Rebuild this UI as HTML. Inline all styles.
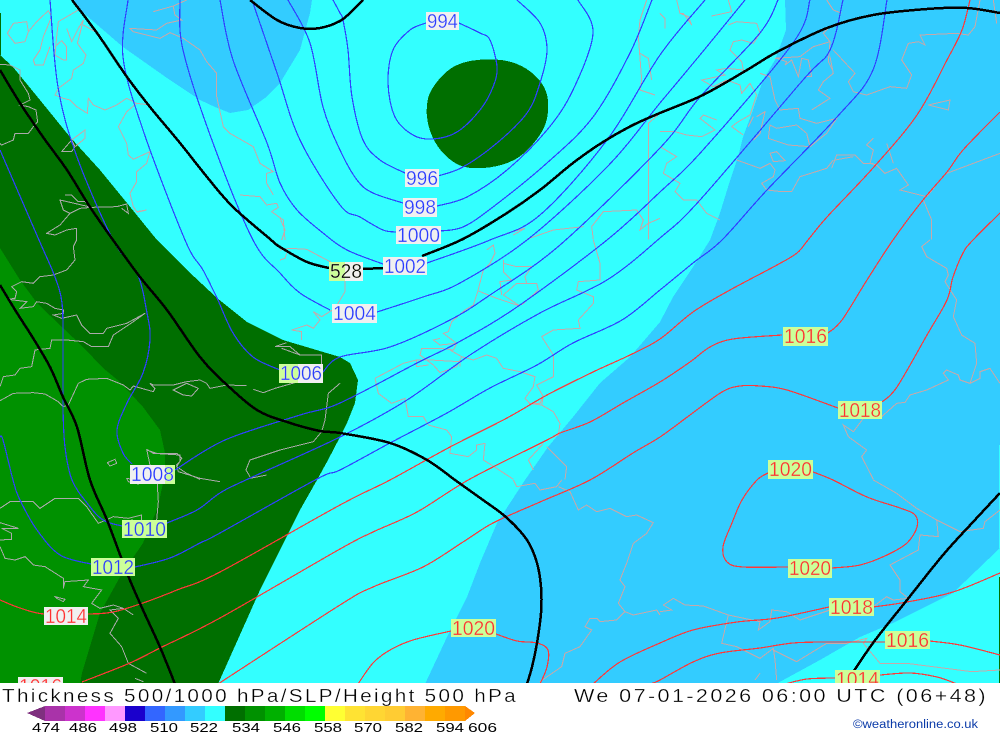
<!DOCTYPE html>
<html><head><meta charset="utf-8"><title>Thickness 500/1000 hPa/SLP/Height 500 hPa</title>
<style>
html,body{margin:0;padding:0;background:#fff;width:1000px;height:733px;overflow:hidden}
svg{display:block}
text{font-family:"Liberation Sans",sans-serif}
.b polyline,.b path{fill:none;stroke:#3040ff;stroke-width:1.2}
.r polyline,.r path{fill:none;stroke:#ff3838;stroke-width:1.2}
.k polyline,.k path{fill:none;stroke:#000;stroke-width:2.5}
.c path{fill:none;stroke-width:3}
.l text{font-size:20px}
.w{fill:#f0f0f0}.g{fill:#ccff99}
.tb{fill:#2a3cff}.tr{fill:#ff3030}.tk{fill:#000}
.sw{stroke:#f0f0f0;stroke-width:.3}.sg{stroke:#ccff99;stroke-width:.3}
</style></head><body>
<svg width="1000" height="733" viewBox="0 0 1000 733" xmlns="http://www.w3.org/2000/svg" shape-rendering="crispEdges">
<rect width="1000" height="684" fill="#33ffff"/>
<path fill="#33ccff" d="M72 0L80 10L123 47L167 78L200 100L215 107L230 113L248 110L265 98L280 83L300 50L310 13L312 0Z"/>
<path fill="#33ccff" d="M785 0L786 30L785 33L775 60L763 80L753 110L743 137L738 157L728 187L720 213L710 240L693 267L673 297L660 322L630 357L600 383L573 417L548 447L525 480L497 523L480 563L467 597L447 637L425 684L776 684L820 660L860 637L893 623L953 593L1000 548V0Z"/>
<path fill="#006f00" d="M0 55L13 67L40 100L70 137L100 170L127 203L157 240L187 270L217 298L247 322L283 340L340 357L350 363L358 380L355 403L347 423L340 437L328 460L317 480L300 510L260 590L218 684H0Z"/>
<path fill="#009100" d="M0 248L20 280L37 303L63 328L83 347L103 368L120 382L143 407L160 430L165 453L165 473L158 507L143 543L120 577L100 613L82 673L80 684H0Z"/>
<path fill="#006f00" d="M495 59.5Q507 60 517 64Q527 68 535 75.5Q543 83 546 91.5Q549 100 548 111.5Q547 123 542 131.5Q537 140 528.5 149Q520 158 508.5 162.5Q497 167 483.5 168Q470 169 461.5 166Q453 163 445 155Q437 147 432.5 137Q428 127 427 117Q426 107 428 98.5Q430 90 438.5 80Q447 70 455 66Q463 62 473 60.5Q483 59 495 59.5Z"/>
<rect x="0" y="13" width="1" height="42" fill="#006f00"/>
<rect x="999" y="577" width="1" height="107" fill="#006f00"/>
<rect x="999" y="445" width="1" height="103" fill="#33ffff"/>

<!-- coastlines -->
<g class="c" stroke="#c8a8a8">
<g transform="scale(.33333)"><path d="M40 70L80 65L85 95L75 125L45 130L22 100ZM85 95L110 65L145 32L155 50L130 110L120 150L100 180L105 195L130 195L150 140M235 30L175 65L170 110L165 165L190 180L200 180L200 140L185 122L165 140M200 85L215 125L235 85L250 60L240 100L232 130L258 165L250 190L220 210L215 235L175 265L165 285L190 295L210 300L230 320L262 340L265 295L280 315L315 330L350 315L380 295L410 310L450 315M250 75L285 95M410 310L380 335L355 380L380 430L385 465L400 478L450 455L440 490L410 515L410 545L390 580L400 620L410 635L440 630L410 637M460 35L520 18L560 0M520 20L525 45L545 60L500 70L470 90L390 85L400 95L480 115L510 98L550 115L600 150L620 185L650 220L650 290L670 380L690 400L760 440L780 490L820 515L800 520L800 550L820 585M720 585L780 590L800 615L830 610L835 622L815 635L850 660L855 720M215 420L255 390L255 415L225 440"/></g>
<g transform="translate(280,160) scale(.33333)"><path d="M0 175L15 210L5 240M0 270L30 265L80 268L150 305L195 350L195 395L165 445L125 470L100 455L120 480L100 505L80 495L35 510L65 515L65 540M20 280L15 295L0 300"/></g>
<g transform="translate(340,240) scale(.33333)"><path d="M440 30L460 15L465 40L450 70L430 90L413 155L400 195L375 210L335 245L325 275L310 280L350 310L340 330L300 325L245 325L240 345L280 375L300 398L350 380L365 350L330 330M413 152L470 175L540 198L490 165L530 130L590 130L595 150L545 195M490 60L490 95L515 120L480 125L485 165M490 70L530 80L575 80L555 110L560 130M300 295L280 300L300 315L350 310M230 360L270 360L360 365L360 380M230 360L230 380L265 375M105 415L190 370L230 360M105 415L115 460L155 490L195 475L205 530L250 530L265 555L320 570L335 590L330 640L385 650L410 630L410 615L435 610L430 660L470 685L520 718M365 350L400 360L440 345L470 355L490 385L540 395L585 410L580 440L555 475L570 490L600 490L610 470L590 435L640 410L640 345L605 290L640 270L720 265L715 240L760 190L760 170L710 150L715 125L780 120L780 70L760 0M610 470L605 495L640 515L660 550L655 585L640 590M565 490L605 495M620 620L680 680L675 718M610 610L565 660L580 690"/></g>
<g transform="translate(340,480) scale(.33333)"><path d="M520 0L530 20L585 10L600 30L650 20L665 0M655 20L690 35L715 90L740 75L770 95L810 85L860 110L890 105L940 128L920 160L880 190L860 250L840 300L855 320L835 370L855 395L880 405L950 390L960 405M855 395L830 420L780 425L770 415L750 415L735 440L755 450L720 500L675 520L665 560L600 605"/></g>
<g transform="translate(340,0) scale(.33333)"><path d="M920 0L900 60L895 110L905 240L900 270L945 285M900 160L925 175L935 240M500 700L555 685L520 705M560 718L640 690L730 680M760 718L755 680L790 635L890 630L910 660L900 690L925 670L960 655M925 718L925 370L960 340"/></g>
<g transform="translate(660,0) scale(.33333)"><path d="M0 40L15 55L15 85M50 0L60 40L85 50L95 75L70 40L60 40M155 48L215 35L205 0M205 75L230 65L290 70L300 100L280 130L245 120L220 125L210 150L245 185L250 210L200 205L170 210L195 225L125 240L160 260L200 240L240 255L245 280L270 250L290 285L270 345L235 365L215 380L250 405M170 360L130 345L120 355L165 390L125 410L80 405L45 395L0 395M300 220L330 230L345 300L360 330L415 325L420 355L470 370L530 355L500 400L450 440L440 400L410 375L350 385L330 375L325 415L385 435L450 440M500 0L520 30L545 40M510 80L490 100L510 125L505 185L520 215M510 125L460 140L420 170L345 175M510 170L520 220L490 245L475 270L510 295L455 330M520 150L585 220L565 245L580 275L620 285L690 260L740 265L755 225L725 180L745 130L775 125L795 135L780 105L890 100L925 105L945 80L960 0M350 175L380 185L375 195L395 180L415 230L425 175L445 180L455 230L435 230M1000 0L1010 70M805 315L870 300L865 330ZM640 415L620 435L640 450L630 490L650 495L675 520L710 505L745 555L720 570L800 590L825 560M680 430L700 490M515 505L530 465L585 465L610 490L640 490M525 480L580 470M230 480L300 505L330 490L345 510L340 530L305 550L320 570L365 575L395 575L420 530L500 505L520 480M330 460L350 455L375 482L340 485ZM790 600L815 660L815 718M860 520L940 490L1020 460M0 440L50 470L20 490L10 520L60 550L45 575L70 600L110 600L140 640L180 660M290 350L315 335L300 400L280 420M280 350L265 380"/></g>
<g transform="translate(660,240) scale(.33333)"><path d="M810 0L785 20L800 50L860 85L865 105L855 125L890 180L880 230L905 285L945 310L950 370L930 430L900 420L895 405L860 390L850 400L865 420L800 450L750 465L735 487L710 490L665 530L640 535L610 535L580 575L550 555L565 590L620 630L605 650L640 718M930 430L960 415L960 395L990 385L1020 430"/></g>
<g transform="translate(660,480) scale(.33333)"><path d="M640 0L710 40L770 85L830 120L900 155L970 145L975 125L1020 90M830 120L835 170L780 165L775 210L690 255L720 300L720 335L745 355L700 360L680 350L640 380L510 390M0 395L35 390L10 375L40 355L75 375L130 378L205 405L300 425L295 450L330 425L335 390L380 395L420 420L480 400L510 390M205 405L185 490L230 500L300 535L340 505L345 540L350 600M340 510L410 545L500 490L560 490L620 475L610 490L660 550L740 550L935 575L1020 570M300 580L285 600"/></g>
</g>
<g class="c" stroke="#aaaaaa">
<g transform="scale(.33333)"><path d="M0 193L30 195L60 210L60 240L85 280L90 300L60 315L85 320L108 330L113 365L100 380L85 400L45 400L40 420L5 435L0 430M185 455L215 420L225 440L215 455ZM195 585L215 585L235 605L255 605L275 622L350 620L380 612L385 640L365 625M275 622L240 625L210 640L190 630L180 600ZM210 640L180 675L140 700L165 705L200 690L230 685L230 720"/></g>
<g transform="translate(0,240) scale(.33333)"><path d="M230 0L220 20L225 60L200 90L160 105L120 110L100 130L65 125L35 140L50 155L45 175L25 178L80 185L60 205L100 200L110 185L140 190L165 205L190 210L190 220L160 225L185 235L230 225L245 255L270 280L310 280L320 265L380 250L435 220L400 245L340 285L325 320L275 320L250 305L200 300L155 300L150 325L105 330L95 380L60 385L45 405L10 410L0 440M0 482L40 460L100 458L135 462L175 485L190 500L205 495L235 430L260 418L320 415L370 435L390 450L400 438L460 455L465 445L450 430L460 435L520 435L560 425L600 420L620 430L630 445L680 435L740 437M520 450L560 430L595 445L575 468L550 465ZM760 448L790 458L825 445L895 425L965 400L965 345L900 345L870 320L825 320L860 308M845 325L900 345M322 668L345 658L350 670L330 678ZM1020 430L985 460L975 540L965 575L940 605L840 630L750 660L738 690L750 710M750 715L800 705M440 630L470 640L530 640L545 655L530 680L560 700L600 718"/></g>
<g transform="translate(0,440) scale(.33333)"><path d="M440 28L460 40L540 45L540 65L530 75L535 95L600 115L660 125M470 100L475 185L470 240M440 28L450 75M380 115L410 120L415 132L385 125ZM0 205L30 185L100 185L120 205L165 175L235 175L260 200L295 250L340 230L385 235L425 225L425 245L395 240L410 270M0 248L55 265L5 265L35 280L35 298L0 300M0 320L15 355L45 360L75 350L100 375L135 380L190 415L190 445L195 425L265 420L250 440L305 450L290 470L275 490L300 505L340 495L370 505L400 525L370 505L330 510L355 535L330 580L365 620L385 670L440 700M165 470L195 478L190 485L170 475ZM405 715L430 725"/></g>
</g>

<!-- isobars blue -->
<g class="b">
<polyline points="426,23 410,30 393,50 388,83 395,117 413,135 433,139 457,132 480,110 493,87 497,67 490,40 480,33 459,23"/>
<polyline points="333,0 340,13 343,20 348,50 352,97 363,140 380,160 405,173"/>
<polyline points="438,176 463,167 497,143 527,113 540,83 547,50 540,23 517,0"/>
<polyline points="288,0 310,43 323,107 340,150 357,180 373,193 403,203"/>
<polyline points="437,206 467,197 507,170 547,130 573,90 593,33 578,0"/>
<polyline points="253,3 277,73 300,140 340,205 360,217 383,230 397,232"/>
<polyline points="440,231 463,227 493,207 547,163 593,117 630,53 652,0"/>
<polyline points="220,0 233,60 267,143 280,183 297,210 323,233 347,250 383,264"/>
<polyline points="427,263 490,240 540,215 607,140 660,55 705,0"/>
<polyline points="180,0 183,50 213,143 253,240 280,273 300,293 330,310"/>
<polyline points="377,312 423,297 460,283 527,240 607,167 660,103 700,55 745,0"/>
<polyline points="128,0 123,57 143,130 185,240 203,270 217,298 233,333 253,357 280,370"/>
<polyline points="323,372 340,357 390,347 450,320 490,295 560,245 660,148 700,97 760,33 778,0"/>
<polyline points="50,0 58,87 77,157 113,240 137,273 147,313 150,340 143,373 127,403 117,430 123,453 132,464"/>
<polyline points="175,470 225,440 300,415 340,403 417,363 457,343 517,307 607,240 660,192 703,150 793,43 810,0"/>
<polyline points="0,150 39,240 55,277 62,303 63,340 63,407 65,447 72,480 87,503 103,520 122,526"/>
<polyline points="167,523 197,510 220,493 248,479 340,437 407,400 473,353 540,313 607,280 660,238 700,200 803,80 830,50 843,0"/>
<polyline points="0,437 3,440 13,480 20,500 37,530 60,555 91,564"/>
<polyline points="135,567 170,558 200,543 220,533 317,479 340,470 390,443 447,413 490,388 537,365 573,343 622,320 660,290 693,263 722,240 767,190 837,117 873,70 887,0"/>
</g>

<!-- isobars red -->
<g class="r">
<polyline points="0,600 20,608 44,614 88,614 113,612 143,603 177,590 220,572 340,505 390,480 450,447 507,418 547,395 593,372 630,355 660,339 693,312 730,290 777,265 797,253 808,240 827,217 873,168 917,115 947,60 962,30 970,0"/>
<polyline points="82,682 130,663 160,648 220,618 340,549 373,532 417,512 470,479 547,440 560,433 590,422 623,403 660,382 690,362 710,347 733,339 782,335"/>
<polyline points="828,333 842,320 867,280 893,240 923,200 947,172 963,150 1000,112"/>
<polyline points="218,684 340,605 373,587 423,567 463,542 493,523 540,502 590,480 633,453 660,437 690,415 722,392 740,386 760,386 787,390 838,408"/>
<polyline points="882,402 897,387 927,335 947,300 953,277 963,253 973,240 1000,213"/>
<polyline points="788,567 743,567 727,562 723,547 732,523 742,500 757,480 768,473"/>
<polyline points="813,472 833,480 867,497 900,508 915,515 917,527 907,543 887,555 860,565 832,568"/>
<polyline points="358,684 373,663 390,650 413,640 451,631"/>
<polyline points="496,634 517,641 537,643 548,650 547,667 540,684"/>
<polyline points="593,684 620,662 660,643 693,630 737,622 777,618 829,607"/>
<polyline points="873,607 907,602 953,592 1000,573"/>
<polyline points="650,684 660,680 693,662 720,653 760,648 793,643 827,642 885,642"/>
<polyline points="930,641 960,645 1000,655"/>
<polyline points="785,684 807,679 835,678"/>
<polyline points="880,675 910,673 937,677 957,684"/>
</g>

<!-- thick black contours -->
<g class="k">
<polyline points="72,0 97,33 127,77 150,107 180,143 207,177 233,207 270,239 280,247 307,262 329,268"/>
<polyline points="363,269 383,268"/>
<polyline points="422,256 463,239 507,213 540,190 573,163 603,142 633,125 660,113 703,95 747,70 777,52 827,28 873,15 927,9 967,8 1000,13"/>
<polyline points="250,0 277,20 300,28 320,28 340,21 353,10 363,0"/>
<polyline points="0,70 20,103 43,137 67,170 90,207 113,240 140,277 167,310 200,357 227,385 257,410 287,422 320,431 340,433 390,443 427,460 455,480 483,500 507,518 527,540 537,563 541,587 541,613 537,643 532,667 527,684"/>
<polyline points="0,285 17,313 33,338 50,367 63,397 77,427 90,480 107,520 127,573 143,610 160,647 175,684"/>
<polyline points="848,680 873,643 907,600 943,555 973,522 1000,493"/>
</g>

<!-- labels -->
<g class="l">
<rect class="w" x="426" y="12" width="33" height="18"/><text class="tb sw" x="427" y="28" textLength="31" lengthAdjust="spacingAndGlyphs">994</text>
<rect class="w" x="405" y="169" width="34" height="18"/><text class="tb sw" x="406" y="185" textLength="32" lengthAdjust="spacingAndGlyphs">996</text>
<rect class="w" x="403" y="198" width="34" height="19"/><text class="tb sw" x="404" y="214" textLength="32" lengthAdjust="spacingAndGlyphs">998</text>
<rect class="w" x="396" y="226" width="45" height="18"/><text class="tb sw" x="397" y="242" textLength="43" lengthAdjust="spacingAndGlyphs">1000</text>
<rect class="w" x="383" y="257" width="44" height="18"/><text class="tb sw" x="384" y="273" textLength="42" lengthAdjust="spacingAndGlyphs">1002</text>
<rect class="w" x="329" y="262" width="34" height="19"/><rect class="g" x="329" y="262" width="16" height="19"/><text class="tk" x="330" y="278" textLength="32" lengthAdjust="spacingAndGlyphs" stroke="#e8f4d8" stroke-width=".3">528</text>
<rect class="w" x="332" y="304" width="45" height="19"/><text class="tb sw" x="333" y="320" textLength="43" lengthAdjust="spacingAndGlyphs">1004</text>
<rect class="w" x="279" y="364" width="44" height="19"/><rect class="g" x="279" y="364" width="19" height="19"/><text class="tb" x="280" y="380" textLength="42" lengthAdjust="spacingAndGlyphs" stroke="#e8f4d8" stroke-width=".3">1006</text>
<rect class="w" x="130" y="465" width="45" height="19"/><rect class="g" x="165" y="465" width="10" height="19"/><text class="tb sw" x="131" y="481" textLength="43" lengthAdjust="spacingAndGlyphs">1008</text>
<rect class="g" x="122" y="520" width="45" height="18"/><text class="tb sg" x="123" y="536" textLength="43" lengthAdjust="spacingAndGlyphs">1010</text>
<rect class="g" x="91" y="558" width="44" height="18"/><text class="tb sg" x="92" y="574" textLength="42" lengthAdjust="spacingAndGlyphs">1012</text>
<rect class="w" x="44" y="607" width="44" height="18"/><text class="tr sw" x="45" y="623" textLength="42" lengthAdjust="spacingAndGlyphs">1014</text>
<rect class="w" x="18" y="677" width="45" height="18"/><text class="tr sw" x="19" y="693" textLength="43" lengthAdjust="spacingAndGlyphs">1016</text>
<rect class="g" x="783" y="327" width="45" height="19"/><text class="tr sg" x="784" y="343" textLength="43" lengthAdjust="spacingAndGlyphs">1016</text>
<rect class="g" x="838" y="401" width="44" height="18"/><text class="tr sg" x="839" y="417" textLength="42" lengthAdjust="spacingAndGlyphs">1018</text>
<rect class="g" x="768" y="460" width="45" height="19"/><text class="tr sg" x="769" y="476" textLength="43" lengthAdjust="spacingAndGlyphs">1020</text>
<rect class="g" x="788" y="559" width="44" height="19"/><text class="tr sg" x="789" y="575" textLength="42" lengthAdjust="spacingAndGlyphs">1020</text>
<rect class="g" x="829" y="598" width="45" height="18"/><text class="tr sg" x="830" y="614" textLength="43" lengthAdjust="spacingAndGlyphs">1018</text>
<rect class="g" x="885" y="631" width="45" height="18"/><text class="tr sg" x="886" y="647" textLength="43" lengthAdjust="spacingAndGlyphs">1016</text>
<rect class="g" x="835" y="670" width="45" height="18"/><text class="tr sg" x="836" y="686" textLength="43" lengthAdjust="spacingAndGlyphs">1014</text>
<rect class="g" x="451" y="619" width="45" height="18"/><text class="tr sg" x="452" y="635" textLength="43" lengthAdjust="spacingAndGlyphs">1020</text>
</g>

<!-- footer -->
<rect x="0" y="683" width="1000" height="50" fill="#fff"/>
<text x="2" y="702" font-size="18" letter-spacing="2" textLength="516" lengthAdjust="spacingAndGlyphs" fill="#000" stroke="#fff" stroke-width=".3">Thickness 500/1000 hPa/SLP/Height 500 hPa</text>
<text x="574" y="702" font-size="18" letter-spacing="2" textLength="414" lengthAdjust="spacingAndGlyphs" fill="#000" stroke="#fff" stroke-width=".3">We 07-01-2026 06:00 UTC (06+48)</text>

<!-- colour bar -->
<polygon points="27,713 45,706 45,721" fill="#7f307f"/>
<rect x="45" y="706" width="20" height="15" fill="#a933a9"/>
<rect x="65" y="706" width="20" height="15" fill="#cc33cc"/>
<rect x="85" y="706" width="20" height="15" fill="#ff33ff"/>
<rect x="105" y="706" width="20" height="15" fill="#ff99ff"/>
<rect x="125" y="706" width="20" height="15" fill="#1a00cc"/>
<rect x="145" y="706" width="20" height="15" fill="#3366ff"/>
<rect x="165" y="706" width="20" height="15" fill="#3399ff"/>
<rect x="185" y="706" width="20" height="15" fill="#33ccff"/>
<rect x="205" y="706" width="20" height="15" fill="#33ffff"/>
<rect x="225" y="706" width="20" height="15" fill="#006f00"/>
<rect x="245" y="706" width="20" height="15" fill="#009100"/>
<rect x="265" y="706" width="20" height="15" fill="#00b000"/>
<rect x="285" y="706" width="20" height="15" fill="#00dd00"/>
<rect x="305" y="706" width="20" height="15" fill="#00ff00"/>
<rect x="325" y="706" width="20" height="15" fill="#ffff33"/>
<rect x="345" y="706" width="20" height="15" fill="#ffe333"/>
<rect x="365" y="706" width="20" height="15" fill="#ffd633"/>
<rect x="385" y="706" width="20" height="15" fill="#ffcc33"/>
<rect x="405" y="706" width="20" height="15" fill="#ffb333"/>
<rect x="425" y="706" width="20" height="15" fill="#ffaa00"/>
<rect x="445" y="706" width="20" height="15" fill="#ff9900"/>
<polygon points="465,706 475,713 465,721" fill="#ff8800"/>
<g font-size="13" fill="#000">
<text x="32" y="732" textLength="28" lengthAdjust="spacingAndGlyphs">474</text>
<text x="69" y="732" textLength="28" lengthAdjust="spacingAndGlyphs">486</text>
<text x="109" y="732" textLength="28" lengthAdjust="spacingAndGlyphs">498</text>
<text x="150" y="732" textLength="28" lengthAdjust="spacingAndGlyphs">510</text>
<text x="190" y="732" textLength="28" lengthAdjust="spacingAndGlyphs">522</text>
<text x="232" y="732" textLength="28" lengthAdjust="spacingAndGlyphs">534</text>
<text x="273" y="732" textLength="28" lengthAdjust="spacingAndGlyphs">546</text>
<text x="314" y="732" textLength="28" lengthAdjust="spacingAndGlyphs">558</text>
<text x="354" y="732" textLength="28" lengthAdjust="spacingAndGlyphs">570</text>
<text x="395" y="732" textLength="28" lengthAdjust="spacingAndGlyphs">582</text>
<text x="436" y="732" textLength="28" lengthAdjust="spacingAndGlyphs">594</text>
<text x="468" y="732" textLength="29" lengthAdjust="spacingAndGlyphs">606</text>
</g>
<text x="853" y="728" font-size="11.5" textLength="125" lengthAdjust="spacingAndGlyphs" fill="#0a3aa8">©weatheronline.co.uk</text>
</svg>
<script>
document.querySelectorAll('.b polyline,.r polyline,.k polyline').forEach(function(e){
  var p=e.getAttribute('points').trim().split(/\s+/).map(function(s){return s.split(',').map(Number)});
  var d='M'+p[0][0]+' '+p[0][1];
  for(var i=0;i<p.length-1;i++){
    var a=p[i-1]||p[i],b=p[i],c=p[i+1],f=p[i+2]||c;
    d+='C'+(b[0]+(c[0]-a[0])/6).toFixed(1)+' '+(b[1]+(c[1]-a[1])/6).toFixed(1)+' '+(c[0]-(f[0]-b[0])/6).toFixed(1)+' '+(c[1]-(f[1]-b[1])/6).toFixed(1)+' '+c[0]+' '+c[1];
  }
  var n=document.createElementNS('http://www.w3.org/2000/svg','path');
  n.setAttribute('d',d);
  e.parentNode.replaceChild(n,e);
});
</script>
</body></html>
